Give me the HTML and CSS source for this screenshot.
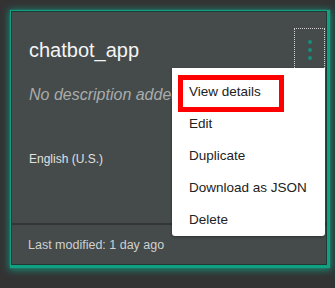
FILE: index.html
```html
<!DOCTYPE html>
<html lang="en">
<head>
    <meta charset="UTF-8">
    <title>Workspaces</title>
    <link rel="stylesheet" href="styles.css">
</head>
<body>

<div class="tile">
    <div class="tile-main">
        <div class="tile-header">
            <h2 class="tile-title">chatbot_app</h2>
            <button class="kebab" aria-label="Menu">
                <span class="dot"></span>
                <span class="dot"></span>
                <span class="dot"></span>
            </button>
        </div>
        <p class="tile-desc">No description added</p>
        <p class="tile-lang">English (U.S.)</p>
    </div>
    <div class="tile-footer">Last modified: 1 day ago</div>

    <!-- overflow menu -->
    <ul class="menu">
        <li class="menu-item">View details</li>
        <li class="menu-item">Edit</li>
        <li class="menu-item">Duplicate</li>
        <li class="menu-item">Download as JSON</li>
        <li class="menu-item">Delete</li>
        <li class="highlight"></li>
    </ul>
</div>

</body>
</html>
```

FILE: styles.css
```css
html {
    height: 100%;
    background-color: #333334;
}

body {
    margin: 0;
    min-height: 100%;
    box-sizing: border-box;
    padding: 11px 0 0 11px;
    background-color: #333334;
    font-family: "Liberation Sans", Arial, sans-serif;
}

.tile {
    position: relative;
    box-sizing: border-box;
    width: 316px;
    height: 254px;
    display: flex;
    flex-direction: column;
    background-color: #454a4a;
    border: 1px solid #1d3a35;
    box-shadow: 1px 1px 1px 2px #12a083, 1px 2px 7px 3px rgba(18, 160, 131, 0.8);
}

.tile-main {
    flex: 1;
    padding: 16px 1px 0 17px;
}

.tile-header {
    display: flex;
    justify-content: space-between;
    align-items: center;
}

.tile-title {
    margin: 0;
    font-size: 20px;
    font-weight: normal;
    line-height: 44px;
    color: #f4f4f4;
}

.kebab {
    box-sizing: border-box;
    width: 31px;
    height: 44px;
    padding: 0;
    background: transparent;
    border: 1px dotted #d0d0d0;
    display: flex;
    flex-direction: column;
    align-items: center;
    justify-content: center;
    gap: 4px;
}

.dot {
    width: 4px;
    height: 4px;
    border-radius: 50%;
    background-color: #14917a;
}

.tile-desc {
    margin: 13px 0 0 0;
    font-size: 16px;
    font-style: italic;
    color: #a9acac;
    line-height: 20px;
}

.tile-lang {
    margin: 46px 0 0 0;
    font-size: 12px;
    color: #e0e0e0;
    line-height: 16px;
}

.tile-footer {
    height: 39px;
    border-top: 2px solid #333535;
    padding-left: 16px;
    font-size: 12.5px;
    line-height: 40px;
    color: #cfd1d1;
}

.menu {
    position: absolute;
    left: 160px;
    top: 56px;
    width: 153px;
    margin: 0;
    padding: 8px 0 0 0;
    box-sizing: border-box;
    height: 168px;
    list-style: none;
    background-color: #fff;
    border-radius: 0 0 3px 3px;
    box-shadow: 0 1px 3px rgba(0, 0, 0, 0.35);
}

.menu-item {
    height: 32px;
    line-height: 32px;
    padding-left: 17px;
    font-size: 13.5px;
    color: #222;
}

.highlight {
    position: absolute;
    left: 6px;
    top: 7px;
    width: 106px;
    height: 37px;
    box-sizing: border-box;
    border: 5px solid #ff0000;
}
```
